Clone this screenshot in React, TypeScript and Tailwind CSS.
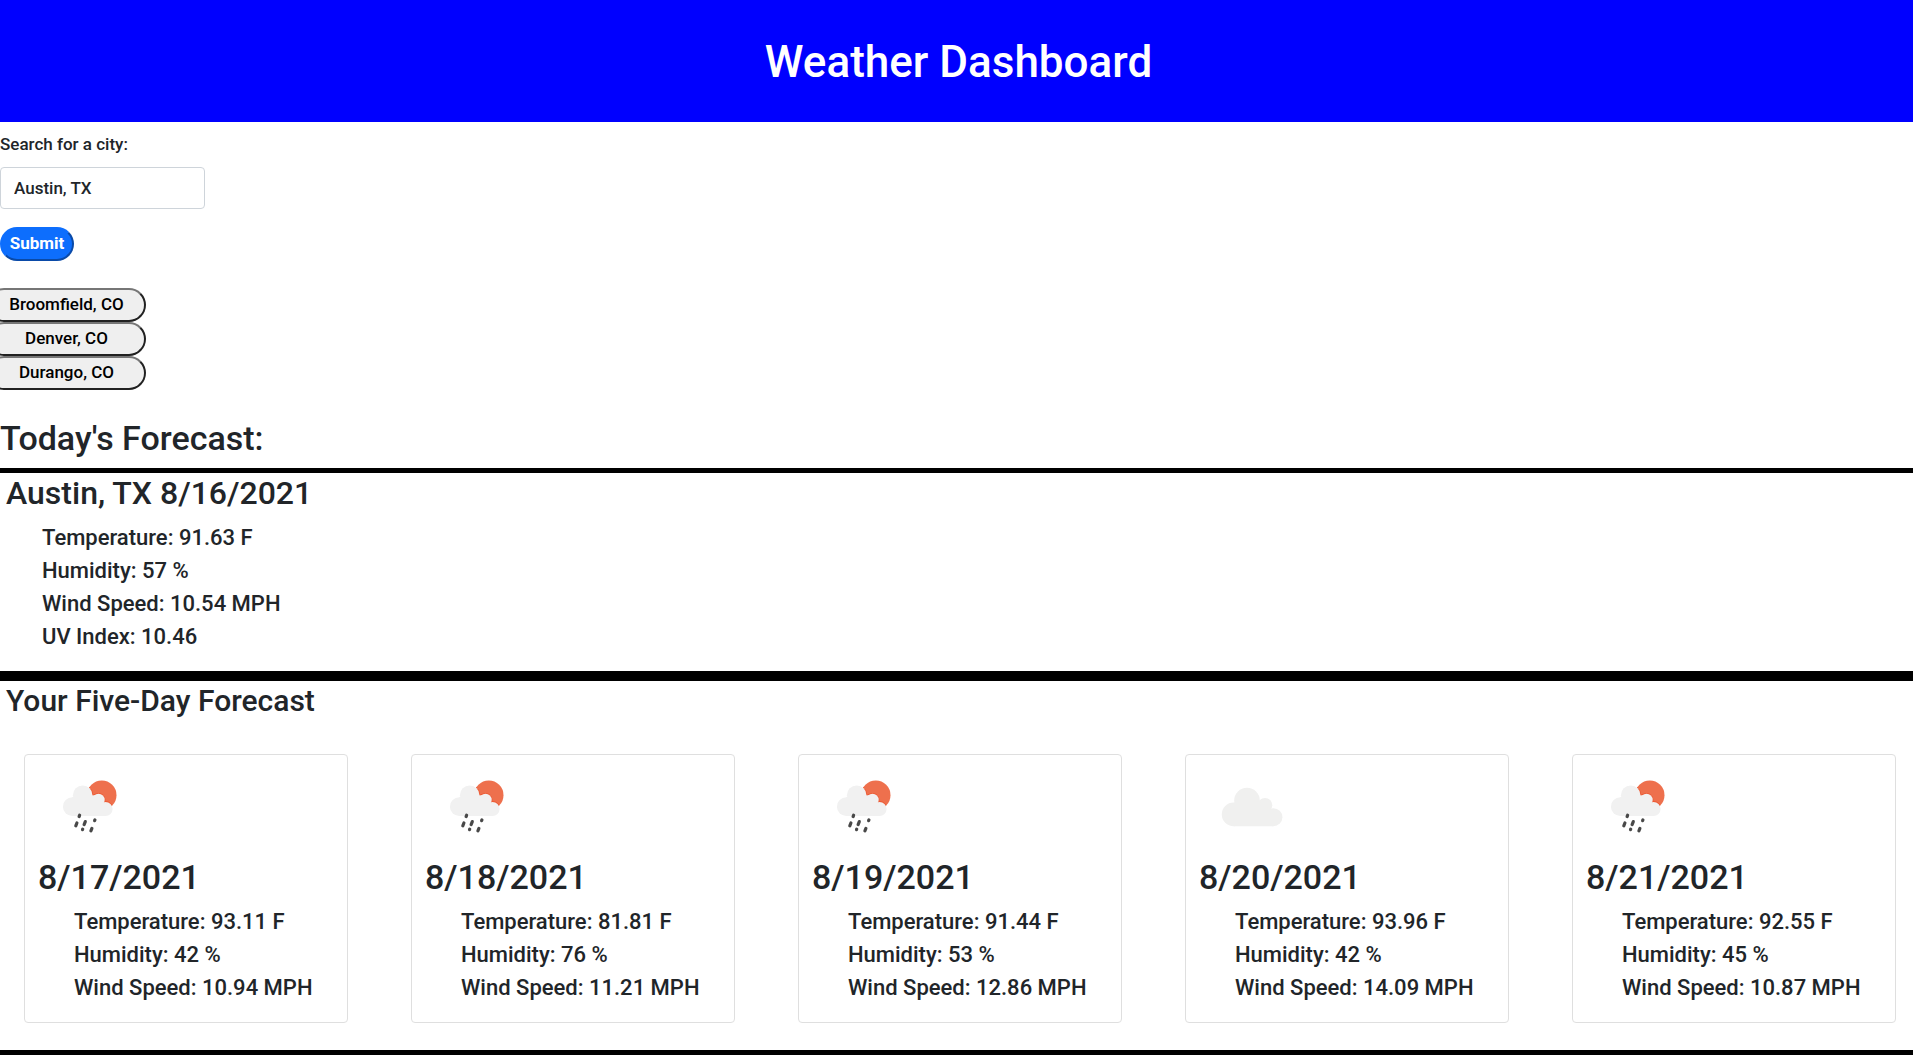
import { useState } from "react";

type IconName = "rain" | "cloud";

interface Day {
  date: string;
  icon: IconName;
  readings: string[];
}

const recentCities = ["Broomfield, CO", "Denver, CO", "Durango, CO"];

const today = [
  "Temperature: 91.63 F",
  "Humidity: 57 %",
  "Wind Speed: 10.54 MPH",
  "UV Index: 10.46",
];

const days: Day[] = [
  { date: "8/17/2021", icon: "rain", readings: ["Temperature: 93.11 F", "Humidity: 42 %", "Wind Speed: 10.94 MPH"] },
  { date: "8/18/2021", icon: "rain", readings: ["Temperature: 81.81 F", "Humidity: 76 %", "Wind Speed: 11.21 MPH"] },
  { date: "8/19/2021", icon: "rain", readings: ["Temperature: 91.44 F", "Humidity: 53 %", "Wind Speed: 12.86 MPH"] },
  { date: "8/20/2021", icon: "cloud", readings: ["Temperature: 93.96 F", "Humidity: 42 %", "Wind Speed: 14.09 MPH"] },
  { date: "8/21/2021", icon: "rain", readings: ["Temperature: 92.55 F", "Humidity: 45 %", "Wind Speed: 10.87 MPH"] },
];

const rainCloud = (
  <>
    <circle cx="34.3" cy="49.7" r="9.4" />
    <circle cx="44.7" cy="38.2" r="9.8" />
    <circle cx="60.5" cy="43" r="6.2" />
    <circle cx="67.5" cy="52" r="7.1" />
    <path d="M34.3 40 L60 38 L67.5 50 V59.1 H34.3 Z" />
  </>
);

function WeatherIcon({ name }: { name: IconName }) {
  if (name === "cloud") {
    return (
      <svg viewBox="0 0 100 100" className="size-[100px]" fill="#f0f0ef" role="img" aria-label="Cloudy">
        <circle cx="34.6" cy="57.4" r="11.8" />
        <circle cx="48" cy="43.6" r="12.8" />
        <circle cx="66" cy="48.2" r="7.3" />
        <circle cx="74.4" cy="60.2" r="9" />
        <path d="M34.6 46 L60 44 L74.4 55 V69.2 H34.6 Z" />
      </svg>
    );
  }
  return (
    <svg viewBox="0 0 100 100" className="size-[100px]" role="img" aria-label="Rain">
      <clipPath id="sun">
        <circle cx="63.8" cy="38.2" r="14.7" />
      </clipPath>
      <circle cx="63.8" cy="38.2" r="14.7" fill="#ee704d" />
      <g clipPath="url(#sun)" fill="#ec5a34" stroke="#ec5a34" strokeWidth="1.6">
        {rainCloud}
      </g>
      <g fill="#f1f1f1">{rainCloud}</g>
      <g stroke="#484848" strokeWidth="3.2" strokeLinecap="round">
        <path d="M41.6 58.2 L41.1 59.6" />
        <path d="M38.9 66 L37.8 68.8" />
        <path d="M47.3 64.6 L46.1 67.6" />
        <path d="M56.9 63 L56.6 63.7" />
        <path d="M44.7 72.2 L44.5 72.7" />
        <path d="M53.9 71.4 L52.9 73.8" />
      </g>
    </svg>
  );
}

function Readings({ items }: { items: string[] }) {
  return (
    <ul className="pb-[18px] pl-9 text-[22px] leading-[33px]">
      {items.map((item) => (
        <li key={item}>{item}</li>
      ))}
    </ul>
  );
}

export default function App() {
  const [city, setCity] = useState("Austin, TX");

  return (
    <div className="bg-white font-['Roboto',sans-serif] font-medium text-[#212529]">
      <header className="flex h-[122px] items-center justify-center bg-[#0000ff] pt-0.5 pl-1">
        <h1 className="text-[44px] text-white">Weather Dashboard</h1>
      </header>

      <main>
        <form className="pt-2" onSubmit={(e) => e.preventDefault()}>
          <label htmlFor="city" className="block text-[17px] leading-7">
            Search for a city:
          </label>
          <input
            id="city"
            type="text"
            value={city}
            onChange={(e) => setCity(e.target.value)}
            className="mt-[9px] block h-[42px] w-[205px] rounded border border-[#ced4da] bg-white px-[13px] text-[17px]"
          />
          <button
            type="submit"
            className="mt-[18px] block h-[34px] w-[74px] rounded-full border-2 border-t-[#0d6efd] border-r-[#0a4aa8] border-b-[#0a4aa8] border-l-[#0d6efd] bg-[#0d6efd] text-[17px] font-bold text-white"
          >
            Submit
          </button>
        </form>

        <div className="-ml-[13px] mt-[27px] w-[159px]">
          {recentCities.map((name) => (
            <button
              key={name}
              type="button"
              onClick={() => setCity(name)}
              className="block h-[34px] w-full rounded-full border-2 border-t-[#767676] border-r-[#212121] border-b-[#212121] border-l-[#767676] bg-[#efefef] text-[17px] text-black"
            >
              {name}
            </button>
          ))}
        </div>

        <h2 className="mt-[18px] text-[34px] leading-[60px]">Today's Forecast:</h2>

        <section className="border-y-[5px] border-black px-1.5">
          <h3 className="mb-2 text-[32px] leading-10">Austin, TX 8/16/2021</h3>
          <Readings items={today} />
        </section>

        <section className="border-y-[5px] border-black">
          <h3 className="px-1.5 text-[30px] leading-10">Your Five-Day Forecast</h3>
          <div className="mt-[33px] mb-[27px] grid grid-cols-5 gap-[63px] pr-[17px] pl-6">
            {days.map((day) => (
              <article key={day.date} className="rounded border border-[#dfdfdf] px-[13px] pt-0.5">
                <WeatherIcon name={day.icon} />
                <h4 className="mb-2 text-[34px] leading-10">{day.date}</h4>
                <Readings items={day.readings} />
              </article>
            ))}
          </div>
        </section>
      </main>
    </div>
  );
}
